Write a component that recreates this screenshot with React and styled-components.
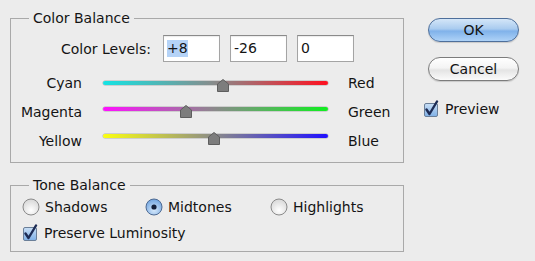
import React from "react";
import styled, { createGlobalStyle } from "styled-components";

const Global = createGlobalStyle`
  html, body {
    margin: 0;
    background: #ececec;
  }
  body {
    font-family: "DejaVu Sans", Verdana, sans-serif;
    font-size: 14px;
    color: #141414;
  }
`;

const Dialog = styled.div`
  width: 535px;
  height: 261px;
  display: flex;
  box-sizing: border-box;
  padding: 10px 0 0 10px;
`;

const Left = styled.div`
  width: 394px;
  display: flex;
  flex-direction: column;
`;

const Group = styled.fieldset`
  margin: 0;
  padding: 0;
  border: 1px solid #a9a9a9;
  min-width: 0;
  & + & {
    margin-top: 14px;
  }
  & > legend {
    margin-left: 18px;
    padding: 0 4px;
    line-height: 17px;
  }
`;

const LevelsRow = styled.div`
  display: flex;
  align-items: center;
  gap: 10px;
  margin-top: 8px;
  & > label {
    width: 140px;
    text-align: right;
    margin-right: 2px;
  }
`;

const LevelInput = styled.div`
  width: 57px;
  height: 27px;
  box-sizing: border-box;
  background: #fff;
  border: 1px solid #a4a4a4;
  border-top-color: #8a8a8a;
  box-shadow: inset 0 1px 1px rgba(0, 0, 0, 0.08);
  padding: 0 3px;
  display: flex;
  align-items: center;
  & > span {
    background: ${(p) => (p.$selected ? "#b5d3f7" : "transparent")};
    line-height: 17px;
  }
`;

const Sliders = styled.div`
  display: flex;
  flex-direction: column;
  gap: 12px;
  margin-top: 13px;
  padding-bottom: 12px;
`;

const SliderRow = styled.div`
  display: flex;
  align-items: flex-start;
  height: 17px;
  line-height: 17px;
  & > .left {
    width: 71px;
    text-align: right;
  }
  & > .right {
    margin-left: 20px;
  }
`;

const Slider = styled.div`
  position: relative;
  width: 225px;
  height: 14px;
  margin-left: 21px;
  margin-top: ${(p) => p.$shift}px;
`;

const Track = styled.div`
  height: 4px;
  margin-top: 2px;
  border-radius: 2px;
  background: linear-gradient(to right, ${(p) => p.$from}, #8a8a8a 50%, ${(p) => p.$to});
  box-shadow: 0 0 0 0.5px rgba(0, 0, 0, 0.25);
`;

const Thumb = styled.svg`
  position: absolute;
  top: 0;
  margin-left: -6px;
`;

const ToneRow = styled.div`
  display: grid;
  grid-template-columns: 123px 125px auto;
  align-items: center;
  padding-left: 11px;
  margin-top: 2px;
  height: 22px;
`;

const Option = styled.label`
  display: flex;
  align-items: center;
  gap: 5px;
`;

const CheckRow = styled.label`
  display: flex;
  align-items: center;
  gap: 6px;
  padding-left: ${(p) => p.$indent || 0}px;
  margin-top: ${(p) => p.$top || 0}px;
  margin-bottom: ${(p) => p.$bottom || 0}px;
`;

const Right = styled.div`
  display: flex;
  flex-direction: column;
  padding-left: 19px;
  padding-top: 8px;
`;

const Button = styled.div`
  width: 91px;
  height: 24px;
  box-sizing: border-box;
  margin-left: 5px;
  border-radius: 12px;
  display: flex;
  align-items: center;
  justify-content: center;
  font-size: 14px;
  border: 1px solid ${(p) => (p.$primary ? "#4e6f9b" : "#7c7c7c")};
  background: ${(p) =>
    p.$primary
      ? "linear-gradient(to bottom, #d4e6f8 0%, #a9cbef 45%, #80b2ea 55%, #aed2f7 100%)"
      : "linear-gradient(to bottom, #ffffff 0%, #f4f4f4 45%, #e4e4e4 55%, #fbfbfb 100%)"};
  box-shadow: 0 1px 1px rgba(0, 0, 0, 0.15);
  & + & {
    margin-top: 15px;
  }
`;

function SliderThumb({ pos }) {
  return (
    <Thumb width="12" height="13" viewBox="0 0 12 13" style={{ left: `${pos}%` }}>
      <path d="M6 0.5 L11.5 5 L11.5 12.5 L0.5 12.5 L0.5 5 Z" fill="#7d7d7d" stroke="#5e5e5e" strokeWidth="1" />
    </Thumb>
  );
}

function Check() {
  return (
    <svg width="16" height="18" viewBox="0 0 16 18">
      <defs>
        <linearGradient id="cb" x1="0" y1="0" x2="0" y2="1">
          <stop offset="0" stopColor="#c9dff6" />
          <stop offset="1" stopColor="#7fb0e6" />
        </linearGradient>
      </defs>
      <rect x="1.5" y="3.5" width="13" height="13" rx="1.5" fill="url(#cb)" stroke="#6b7f98" />
      <path d="M3.5 9.5 L6.5 14 L14 1.5" fill="none" stroke="#1d2c55" strokeWidth="2.4" strokeLinecap="round" strokeLinejoin="round" />
    </svg>
  );
}

function Radio({ checked }) {
  return (
    <svg width="18" height="18" viewBox="0 0 18 18">
      <defs>
        <radialGradient id="rw" cx="0.5" cy="0.7" r="0.7">
          <stop offset="0" stopColor="#ffffff" />
          <stop offset="1" stopColor="#d6d6d6" />
        </radialGradient>
        <radialGradient id="rb" cx="0.5" cy="0.7" r="0.7">
          <stop offset="0" stopColor="#d5e8fb" />
          <stop offset="1" stopColor="#6fa3df" />
        </radialGradient>
      </defs>
      <circle cx="9" cy="9" r="8" fill={checked ? "url(#rb)" : "url(#rw)"} stroke={checked ? "#4e6a92" : "#8a8a8a"} />
      {checked && <circle cx="9" cy="9" r="2.6" fill="#14203a" />}
    </svg>
  );
}

const sliders = [
  { left: "Cyan", right: "Red", from: "#14e3e3", to: "#ff1020", pos: 53.5, shift: 4 },
  { left: "Magenta", right: "Green", from: "#ff10ff", to: "#10ee20", pos: 37, shift: 1 },
  { left: "Yellow", right: "Blue", from: "#fbff10", to: "#2010ff", pos: 49.5, shift: -1 },
];

export default function App() {
  return (
    <>
      <Global />
      <Dialog>
        <Left>
          <Group>
            <legend>Color Balance</legend>
            <LevelsRow>
              <label>Color Levels:</label>
              <LevelInput $selected><span>+8</span></LevelInput>
              <LevelInput><span>-26</span></LevelInput>
              <LevelInput><span>0</span></LevelInput>
            </LevelsRow>
            <Sliders>
              {sliders.map((s) => (
                <SliderRow key={s.left}>
                  <span className="left">{s.left}</span>
                  <Slider $shift={s.shift}>
                    <Track $from={s.from} $to={s.to} />
                    <SliderThumb pos={s.pos} />
                  </Slider>
                  <span className="right">{s.right}</span>
                </SliderRow>
              ))}
            </Sliders>
          </Group>
          <Group>
            <legend>Tone Balance</legend>
            <ToneRow>
              <Option><Radio />Shadows</Option>
              <Option><Radio checked />Midtones</Option>
              <Option><Radio />Highlights</Option>
            </ToneRow>
            <CheckRow $indent={11} $top={6} $bottom={9}>
              <Check />
              Preserve Luminosity
            </CheckRow>
          </Group>
        </Left>
        <Right>
          <Button $primary>OK</Button>
          <Button>Cancel</Button>
          <CheckRow $top={19}>
            <Check />
            Preview
          </CheckRow>
        </Right>
      </Dialog>
    </>
  );
}
